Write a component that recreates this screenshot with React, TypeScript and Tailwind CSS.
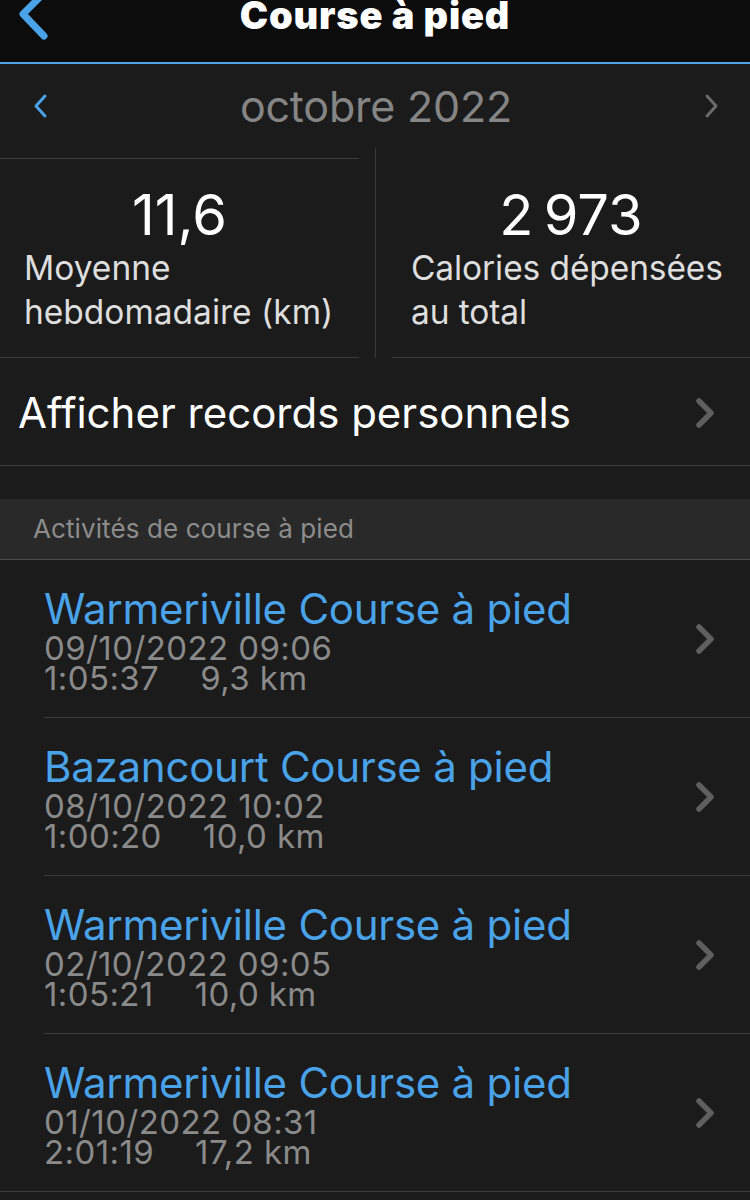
import React from "react";

const Chevron = ({ className = "" }: { className?: string }) => (
  <svg width="24" height="34" viewBox="0 0 24 34" className={className} fill="none">
    <path d="M5 5 L17 17 L5 29" stroke="currentColor" strokeWidth="5.5" strokeLinecap="round" strokeLinejoin="round" />
  </svg>
);

const activities = [
  { title: "Warmeriville Course à pied", date: "09/10/2022 09:06", dur: "1:05:37", dist: "9,3 km" },
  { title: "Bazancourt Course à pied", date: "08/10/2022 10:02", dur: "1:00:20", dist: "10,0 km" },
  { title: "Warmeriville Course à pied", date: "02/10/2022 09:05", dur: "1:05:21", dist: "10,0 km" },
  { title: "Warmeriville Course à pied", date: "01/10/2022 08:31", dur: "2:01:19", dist: "17,2 km" },
];

export default function App() {
  return (
    <div className="w-[750px] h-[1200px] overflow-hidden bg-[#1b1b1b] font-['Inter',sans-serif]">
      {/* Header */}
      <header className="relative h-[64px] bg-[#0c0c0c] border-b-2 border-[#4aa3e8] flex justify-center">
        <svg className="absolute left-0 top-0" width="60" height="50" viewBox="0 0 60 50" fill="none">
          <path d="M45 -8 L23 14 L44 36" stroke="#4aa3e8" strokeWidth="7" strokeLinecap="round" strokeLinejoin="round" />
        </svg>
        <h1 className="text-[38px] font-black text-white leading-none -mt-[4px] tracking-[0.8px]">Course à pied</h1>
      </header>

      {/* Month row */}
      <div className="h-[84px] flex items-center justify-between pl-[30px] pr-[28px]">
        <svg width="20" height="30" viewBox="0 0 20 30" fill="none">
          <path d="M15 5 L6 15 L15 25" stroke="#4aa3e8" strokeWidth="3" strokeLinecap="round" strokeLinejoin="round" />
        </svg>
        <div className="text-[43px] text-[#858585] leading-none tracking-[-0.2px]">octobre 2022</div>
        <svg width="20" height="30" viewBox="0 0 20 30" fill="none">
          <path d="M5 5 L14 15 L5 25" stroke="#6b6b6b" strokeWidth="3" strokeLinecap="round" strokeLinejoin="round" />
        </svg>
      </div>

      {/* Stats */}
      <div className="flex h-[210px]">
        <div className="w-[359px] flex flex-col">
          <div className="mt-[10px] flex-1 border-t border-b border-[#3a3a3a] pt-[28px] pl-[24px]">
            <div className="text-center pr-[24px] text-[56px] leading-[56px] text-white">11,6</div>
            <div className="mt-[3px] text-[33.5px] leading-[44px] text-[#dedede]">
              Moyenne
              <br />
              hebdomadaire (km)
            </div>
          </div>
        </div>
        <div className="w-[33px] flex justify-center">
          <div className="w-px h-full bg-[#3a3a3a]" />
        </div>
        <div className="flex-1 border-b border-[#3a3a3a] pt-[39px] pl-[19px]">
          <div className="text-center pr-[19px] text-[56px] leading-[56px] text-white">2{"\u202F"}973</div>
          <div className="mt-[3px] text-[33.5px] leading-[44px] text-[#dedede] tracking-[-0.1px]">
            Calories dépensées
            <br />
            au total
          </div>
        </div>
      </div>

      {/* Records row */}
      <div className="h-[108px] border-b border-[#3a3a3a] flex items-center justify-between pt-[2px] pl-[18px] pr-[32px]">
        <div className="text-[42px] text-white leading-none">Afficher records personnels</div>
        <Chevron className="text-[#5f5f5f]" />
      </div>

      <div className="h-[33px]" />

      {/* Section header */}
      <div className="h-[61px] bg-[#292929] border-b border-[#4a4a4a] flex items-center pl-[33px]">
        <span className="text-[26px] text-[#8c8c8c] leading-none tracking-[0.1px]">Activités de course à pied</span>
      </div>

      {/* Activities */}
      <div>
        {activities.map((a, i) => {
          const last = i === activities.length - 1;
          return (
            <div key={i} className={last ? "border-b border-[#3a3a3a]" : ""}>
              <div
                className={`ml-[44px] flex items-center justify-between pr-[32px] ${
                  last ? "h-[157px]" : "h-[158px] border-b border-[#3a3a3a]"
                }`}
              >
                <div>
                  <div className="text-[42px] leading-[49px] text-[#4aa3e8] tracking-[-0.25px]">{a.title}</div>
                  <div className="text-[33px] leading-[30px] text-[#8a8a8a] tracking-[0.4px]">{a.date}</div>
                  <div className="text-[33px] leading-[30px] text-[#8a8a8a] flex tracking-[0.4px]">
                    <span>{a.dur}</span>
                    <span className="ml-[41px]">{a.dist}</span>
                  </div>
                </div>
                <Chevron className="text-[#5f5f5f]" />
              </div>
            </div>
          );
        })}
      </div>
    </div>
  );
}
